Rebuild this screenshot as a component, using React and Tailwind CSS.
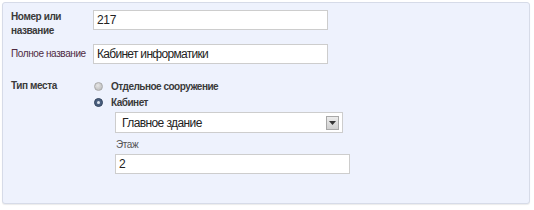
export default function App() {
  return (
    <div className="w-[534px] h-[210px] bg-white pt-[2px] pl-[2px] font-[family-name:Liberation_Sans,Arial,sans-serif]">
      <div className="w-[528px] h-[202px] rounded-[3px] border border-[#d6dbe8] bg-[#eef2fd] pl-[8px] pt-[6px] shadow-[0_1px_1px_rgba(0,0,0,0.08)]">
        {/* Номер */}
        <div className="flex">
          <div className="w-[82px] pt-[1px] text-[10px] leading-[14px] tracking-[-0.4px] font-bold text-[#3a3a3a]">
            Номер или
            <br />
            название
          </div>
          <div className="mt-[1px] w-[235px] h-[20px] border border-[#cdcdcd] bg-white px-[3px] text-[12px] tracking-[-0.3px] leading-[18px] text-[#222]">
            217
          </div>
        </div>

        {/* Полное название */}
        <div className="flex items-center mt-[6px]">
          <div className="w-[82px] whitespace-nowrap text-[10px] leading-[14px] tracking-[-0.4px] text-[#4e2a42]">
            Полное название
          </div>
          <div className="w-[235px] h-[20px] border border-[#cdcdcd] bg-white px-[3px] text-[12px] tracking-[-0.7px] leading-[18px] text-[#222]">
            Кабинет информатики
          </div>
        </div>

        {/* Тип места */}
        <div className="flex mt-[15px]">
          <div className="w-[82px] text-[10px] leading-[14px] tracking-[-0.4px] font-bold text-[#3a3a3a]">
            Тип места
          </div>
          <div className="flex flex-col">
            <div className="flex items-center h-[14px] gap-[8px] pl-[1px]">
              <span className="w-[9px] h-[9px] rounded-full bg-[radial-gradient(circle_at_40%_35%,#e6e6e6,#b4b4b4)] border border-[#aaa]" />
              <span className="text-[10px] tracking-[-0.5px] font-bold text-[#3a3a3a]">Отдельное сооружение</span>
            </div>
            <div className="flex items-center h-[14px] gap-[8px] pl-[1px] mt-[2px]">
              <span className="w-[9px] h-[9px] rounded-full bg-[#4a5f7e] border border-[#34465f] flex items-center justify-center">
                <span className="w-[3px] h-[3px] rounded-full bg-[#dfe6f0]" />
              </span>
              <span className="text-[10px] tracking-[-0.5px] font-bold text-[#3a3a3a]">Кабинет</span>
            </div>

            <div className="ml-[22px] mt-[3px] w-[228px] h-[21px] border border-[#cdcdcd] bg-white flex items-center justify-between pl-[6px] pr-[3px]">
              <span className="text-[12px] tracking-[-0.6px] text-[#222]">Главное здание</span>
              <span className="w-[13px] h-[14px] border border-[#a8a8a8] bg-[linear-gradient(#ececec,#cfcfcf)] flex items-center justify-center">
                <svg width="7" height="4" viewBox="0 0 7 4">
                  <path d="M0 0h7L3.5 4z" fill="#333" />
                </svg>
              </span>
            </div>
            <div className="ml-[23px] mt-[5px] text-[10px] leading-[14px] tracking-[-0.4px] text-[#555]">Этаж</div>
            <div className="ml-[22px] mt-[2px] w-[235px] h-[20px] border border-[#cdcdcd] bg-white px-[3px] text-[12px] leading-[18px] text-[#222]">
              2
            </div>
          </div>
        </div>
      </div>
    </div>
  );
}
